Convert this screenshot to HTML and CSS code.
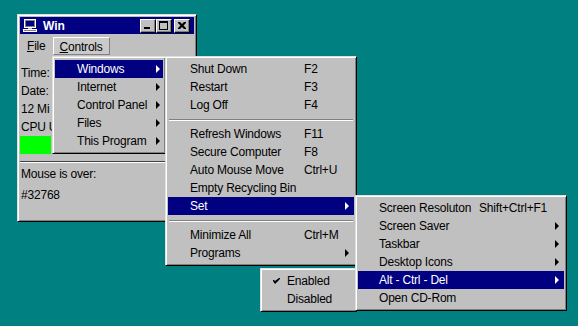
FILE: index.html
```html
<!DOCTYPE html>
<html lang="en">
<head>
    <meta charset="UTF-8">
    <title>Win</title>
    <link rel="stylesheet" href="styles.css">
</head>
<body>

<div class="desktop">

    <!-- Main window -->
    <div class="window">
        <div class="titlebar">
            <svg class="app-icon" width="16" height="16" viewBox="0 0 16 16">
                <rect x="2" y="1" width="12" height="9" fill="#fff"/>
                <rect x="3" y="2" width="10" height="7" fill="#808080"/>
                <rect x="4" y="3" width="8" height="5" fill="#000080"/>
                <rect x="6" y="10" width="4" height="1" fill="#c0c0c0"/>
                <rect x="1" y="11" width="14" height="3" fill="#fff"/>
                <rect x="2" y="12" width="12" height="1" fill="#808080"/>
            </svg>
            <span class="title">Win</span>
            <div class="caption-buttons">
                <div class="cap-btn"><span class="glyph-min"></span></div>
                <div class="cap-btn"><span class="glyph-max"></span></div>
                <div class="cap-btn close">
                    <svg width="8" height="7" viewBox="0 0 8 7">
                        <path d="M0 0h2l2 2 2-2h2v1l-2.5 2.5L8 6v1H6L4 5 2 7H0V6l2.5-2.5L0 1z" fill="#000"/>
                    </svg>
                </div>
            </div>
        </div>
        <div class="menubar">
            <span class="mb-item"><u>F</u>ile</span>
            <span class="mb-item open"><u>C</u>ontrols</span>
        </div>
        <div class="client">
            <!-- stats are partly hidden behind the open menu -->
            <div class="line">Time:</div>
            <div class="line">Date:</div>
            <div class="line">12 Mi</div>
            <div class="line">CPU U</div>
            <div class="cpu-bar"></div>
            <div class="etched"></div>
            <div class="line mouse-label">Mouse is over:</div>
            <div class="line mouse-id">#32768</div>
        </div>
    </div>

    <!-- Controls menu -->
    <div class="menu menu-controls">
        <div class="item active"><span class="mark"></span><span class="label">Windows</span><span class="arrow"></span></div>
        <div class="item"><span class="mark"></span><span class="label">Internet</span><span class="arrow"></span></div>
        <div class="item"><span class="mark"></span><span class="label">Control Panel</span><span class="arrow"></span></div>
        <div class="item"><span class="mark"></span><span class="label">Files</span><span class="arrow"></span></div>
        <div class="item"><span class="mark"></span><span class="label">This Program</span><span class="arrow"></span></div>
    </div>

    <!-- Windows submenu -->
    <div class="menu menu-windows">
        <div class="item"><span class="mark"></span><span class="label">Shut Down</span><span class="key">F2</span></div>
        <div class="item"><span class="mark"></span><span class="label">Restart</span><span class="key">F3</span></div>
        <div class="item"><span class="mark"></span><span class="label">Log Off</span><span class="key">F4</span></div>
        <div class="sep"></div>
        <div class="item"><span class="mark"></span><span class="label">Refresh Windows</span><span class="key">F11</span></div>
        <div class="item"><span class="mark"></span><span class="label">Secure Computer</span><span class="key">F8</span></div>
        <div class="item"><span class="mark"></span><span class="label">Auto Mouse Move</span><span class="key">Ctrl+U</span></div>
        <div class="item"><span class="mark"></span><span class="label">Empty Recycling Bin</span></div>
        <div class="item active"><span class="mark"></span><span class="label">Set</span><span class="arrow"></span></div>
        <div class="sep"></div>
        <div class="item"><span class="mark"></span><span class="label">Minimize All</span><span class="key">Ctrl+M</span></div>
        <div class="item"><span class="mark"></span><span class="label">Programs</span><span class="arrow"></span></div>
    </div>

    <!-- Alt-Ctrl-Del submenu -->
    <div class="menu menu-toggle">
        <div class="item">
            <span class="mark">
                <svg width="7" height="7" viewBox="0 0 7 7">
                    <path d="M0 2h1l1 1 4-3h1v1L2 6 0 3z" fill="#000"/>
                </svg>
            </span>
            <span class="label">Enabled</span>
        </div>
        <div class="item"><span class="mark"></span><span class="label">Disabled</span></div>
    </div>

    <!-- Set submenu -->
    <div class="menu menu-set">
        <div class="item"><span class="mark"></span><span class="label">Screen Resoluton</span><span class="key">Shift+Ctrl+F1</span></div>
        <div class="item"><span class="mark"></span><span class="label">Screen Saver</span><span class="arrow"></span></div>
        <div class="item"><span class="mark"></span><span class="label">Taskbar</span><span class="arrow"></span></div>
        <div class="item"><span class="mark"></span><span class="label">Desktop Icons</span><span class="arrow"></span></div>
        <div class="item active"><span class="mark"></span><span class="label">Alt - Ctrl - Del</span><span class="arrow"></span></div>
        <div class="item"><span class="mark"></span><span class="label">Open CD-Rom</span></div>
    </div>

</div>

</body>
</html>
```

FILE: styles.css
```css
body {
    margin: 0;
    background-color: #008080;
    font-family: "Liberation Sans", Arial, sans-serif;
    font-size: 12px;
    letter-spacing: -0.2px;
    color: #000;
    overflow: hidden;
}
.desktop {
    position: relative;
    width: 578px;
    height: 326px;
}

/* window frame */
.window {
    position: absolute;
    left: 17px;
    top: 14px;
    width: 180px;
    height: 208px;
    box-sizing: border-box;
    background-color: #c0c0c0;
    border: 1px solid;
    border-color: #dfdfdf #000 #000 #dfdfdf;
    box-shadow: inset 1px 1px #fff, inset -1px -1px #808080;
    padding: 2px;
}
.titlebar {
    display: flex;
    align-items: center;
    height: 17px;
    background-color: #000080;
    color: #fff;
    padding-left: 2px;
}
.app-icon {
    flex: none;
}
.title {
    font-weight: bold;
    letter-spacing: 0;
    margin-left: 5px;
}
.caption-buttons {
    display: flex;
    margin-left: auto;
    margin-right: 4px;
}
.cap-btn {
    width: 16px;
    height: 14px;
    box-sizing: border-box;
    background-color: #c0c0c0;
    border: 1px solid;
    border-color: #fff #000 #000 #fff;
    box-shadow: inset -1px -1px #808080;
    position: relative;
}
.cap-btn.close {
    margin-left: 2px;
    display: flex;
    align-items: center;
    justify-content: center;
    padding-bottom: 1px;
}
.glyph-min {
    position: absolute;
    left: 3px;
    bottom: 3px;
    width: 6px;
    height: 2px;
    background-color: #000;
}
.glyph-max {
    position: absolute;
    left: 2px;
    top: 1px;
    width: 9px;
    height: 9px;
    box-sizing: border-box;
    border: 1px solid #000;
    border-top-width: 2px;
}

/* menu bar */
.menubar {
    display: flex;
    height: 20px;
    margin-top: 1px;
}
.mb-item {
    height: 18px;
    line-height: 18px;
    margin-top: 2px;
    padding: 0 7px;
    box-sizing: border-box;
}
.mb-item.open {
    border: 1px solid;
    border-color: #fff #808080 #808080 #fff;
    background-color: #cacaca;
    padding: 0 6px;
}

/* client area */
.client {
    padding: 9px 0 0 1px;
}
.line {
    height: 18px;
    line-height: 18px;
    white-space: nowrap;
}
.cpu-bar {
    width: 31px;
    height: 18px;
    margin-left: -1px;
    background-color: #00ff00;
}
.etched {
    margin: 7px 0 0 -1px;
    border-top: 1px solid #404040;
    border-bottom: 1px solid #fff;
}
.mouse-label {
    margin-top: 2px;
}
.mouse-id {
    margin-top: 3px;
}

/* popup menus */
.menu {
    position: absolute;
    box-sizing: border-box;
    background-color: #c0c0c0;
    border: 1px solid;
    border-color: #dfdfdf #000 #000 #dfdfdf;
    box-shadow: inset 1px 1px #fff, inset -1px -1px #808080;
    padding: 3px 2px;
}
.menu-controls {
    left: 52px;
    top: 56px;
    width: 114px;
}
.menu-windows {
    left: 165px;
    top: 56px;
    width: 192px;
}
.menu-set {
    left: 355px;
    top: 195px;
    width: 212px;
}
.menu-toggle {
    left: 260px;
    top: 268px;
    width: 97px;
}
.item {
    display: flex;
    align-items: center;
    height: 18px;
    padding-right: 4px;
    white-space: nowrap;
}
.item.active {
    background-color: #000080;
    color: #fff;
}
.mark {
    flex: none;
    width: 22px;
    display: flex;
    padding-left: 10px;
    box-sizing: border-box;
}
.menu-toggle .mark {
    width: 24px;
}
.menu-set .mark {
    width: 21px;
}
.menu-windows .label {
    width: 114px;
}
.menu-set .label {
    width: 100px;
}
.arrow {
    margin-left: auto;
    width: 0;
    height: 0;
    border-left: 4px solid #000;
    border-top: 4px solid transparent;
    border-bottom: 4px solid transparent;
}
.item.active .arrow {
    border-left-color: #fff;
}
.menu-windows .item,
.menu-set .item {
    padding-right: 5px;
}
.menu-controls .item {
    padding-right: 3px;
}
.sep {
    height: 11px;
    box-sizing: border-box;
    padding-top: 5px;
}
.sep::before {
    content: "";
    display: block;
    margin: 0 1px;
    border-top: 1px solid #808080;
    border-bottom: 1px solid #fff;
}
```
